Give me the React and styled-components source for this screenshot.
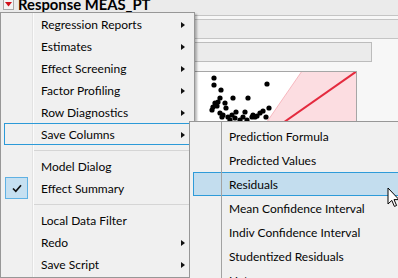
import React from "react";
import styled, { createGlobalStyle } from "styled-components";

const GlobalStyle = createGlobalStyle`
  html, body {
    margin: 0;
    padding: 0;
  }
  body {
    width: 398px;
    height: 278px;
    overflow: hidden;
    background: #f7f7f7;
    font-family: Lato, "Noto Sans", sans-serif;
  }
`;

const Screen = styled.div`
  position: relative;
  width: 398px;
  height: 278px;
  overflow: hidden;
  background: #f7f7f7;
`;

/* ---------- report behind the menus ---------- */

const TitleBar = styled.div`
  display: flex;
  align-items: flex-start;
  height: 15px;
  background: #ebebeb;
  border-bottom: 1px solid #c4c4c4;
`;

const Disclosure = styled.div`
  display: flex;
  align-items: center;
  justify-content: center;
  width: 9px;
  height: 9px;
  margin: 0 4px 0 3px;
  background: #f4f4f4;
  border: 1px solid #a9a9a9;
  border-top: none;
`;

const Title = styled.div`
  font-family: Lato, "Liberation Sans", sans-serif;
  font-weight: bold;
  font-size: 14.8px;
  line-height: 12px;
  margin-top: -2px;
  color: #000;
  white-space: nowrap;
`;

const Strip = styled.div`
  height: 18px;
  margin-top: 3px;
  background: #ebebeb;
  border-top: 1px solid #c4c4c4;
  border-bottom: 1px solid #c4c4c4;
`;

const Field = styled.div`
  width: 340px;
  height: 18px;
  margin: 3px 0 0 30px;
  background: #ebebeb;
  border: 1px solid #bcbcbc;
`;

const PlotFrame = styled.div`
  width: 175px;
  height: 130px;
  margin: 9px 0 0 180px;
  background: #fff;
  border: 1px solid #a6a6a6;
  svg {
    display: block;
  }
`;

/* ---------- popup menus ---------- */

const Menu = styled.div`
  position: absolute;
  left: 0;
  top: 12px;
  width: 193px;
  padding: 0 0 2px;
  background: #f0f0f0;
  border: 1px solid #979797;
  box-shadow: 2px 2px 2px rgba(0, 0, 0, 0.28);
  &::before {
    content: "";
    position: absolute;
    top: 0;
    bottom: 0;
    left: 31px;
    width: 1px;
    background: #e2e2e2;
    border-right: 1px solid #fbfbfb;
  }
`;

const Item = styled.div`
  position: relative;
  display: grid;
  grid-template-columns: 29px 1fr 12px;
  align-items: center;
  height: 22px;
  margin: 0 1px 0 3px;
  padding-top: 1px;
  box-sizing: border-box;
  font-size: 12px;
  color: #050505;
  white-space: nowrap;
  box-shadow: ${(p) => (p.$focus ? "inset 0 0 0 1px #2b9ad8" : "none")};
`;

const Label = styled.span`
  padding-left: 8px;
`;

const Arrow = styled.span`
  width: 0;
  height: 0;
  border-top: 3.5px solid transparent;
  border-bottom: 3.5px solid transparent;
  border-left: 4px solid #111;
`;

const CheckBox = styled.span`
  display: flex;
  align-items: center;
  justify-content: center;
  width: 21px;
  height: 20px;
  margin: -1px 0 0 1px;
  background: #c6e0f1;
  border: 1px solid #5fb1e3;
`;

const Separator = styled.div`
  height: 10px;
  display: flex;
  align-items: center;
  padding: 0 2px 0 33px;
  &::after {
    content: "";
    flex: 1;
    height: 1px;
    background: #d5d5d5;
  }
`;

const SubMenu = styled.div`
  position: absolute;
  left: 189px;
  top: 121px;
  width: 240px;
  padding: 2px 0;
  background: #f0f0f0;
  border: 1px solid #979797;
  &::before {
    content: "";
    position: absolute;
    top: 0;
    bottom: 0;
    left: 31px;
    width: 1px;
    background: #a2a2a2;
    z-index: 1;
  }
`;

const SubItem = styled.div`
  display: flex;
  align-items: center;
  margin-left: 3px;
  padding-top: 1px;
  font-size: 12px;
  color: #050505;
  white-space: nowrap;
  background: ${(p) => (p.$hot ? "#c3ddee" : "transparent")};
  border: ${(p) => (p.$hot ? "1px solid #2e9bd9" : "none")};
  border-right: none;
  padding-left: ${(p) => (p.$hot ? "35px" : "36px")};
  height: ${(p) => (p.$hot ? "21px" : "23px")};
`;

const Cursor = styled.svg`
  position: absolute;
  left: 387px;
  top: 187px;
`;

const dots = [
  [214, 78], [214, 85], [221, 90], [267, 84], [233, 98], [248, 98],
  [220, 98], [215, 103], [217, 106], [225, 103], [226, 108], [212, 110],
  [220, 113], [222, 117], [228, 117], [235, 118], [243, 117], [252, 117],
  [257, 116], [260, 113], [263, 111], [269, 108], [255, 117], [218, 102],
  [213, 107], [232, 115], [253, 115], [223, 115], [230, 120], [247, 120],
  [240, 120], [266, 117], [236, 112], [245, 112],
];

const mainItems = [
  { label: "Regression Reports", sub: true },
  { label: "Estimates", sub: true },
  { label: "Effect Screening", sub: true },
  { label: "Factor Profiling", sub: true },
  { label: "Row Diagnostics", sub: true },
  { label: "Save Columns", sub: true, focus: true },
  { sep: true },
  { label: "Model Dialog" },
  { label: "Effect Summary", checked: true },
  { sep: true },
  { label: "Local Data Filter" },
  { label: "Redo", sub: true },
  { label: "Save Script", sub: true },
];

const subItems = [
  "Prediction Formula",
  "Predicted Values",
  "Residuals",
  "Mean Confidence Interval",
  "Indiv Confidence Interval",
  "Studentized Residuals",
  "Hats",
];

function Plot() {
  return (
    <svg width="175" height="130" viewBox="181 72 175 130">
      <polygon
        points="302,71 357,71 357,203 211,203"
        fill="#fcdde1"
        stroke="#f5aab3"
        strokeWidth="0.8"
      />
      <line x1="357" y1="71" x2="200" y2="181" stroke="#e42a3e" strokeWidth="2" />
      {dots.map(([x, y], i) => (
        <circle key={i} cx={x} cy={y} r="2.6" fill="#000" />
      ))}
    </svg>
  );
}

export default function App() {
  return (
    <Screen>
      <GlobalStyle />
      <TitleBar>
        <Disclosure>
          <svg width="7" height="5" viewBox="0 0 7 5">
            <polygon points="0,0 7,0 3.5,4.5" fill="#d0101a" />
          </svg>
        </Disclosure>
        <Title>Response MEAS_PT</Title>
      </TitleBar>
      <Strip />
      <Field />
      <PlotFrame>
        <Plot />
      </PlotFrame>

      <Menu>
        {mainItems.map((it, i) =>
          it.sep ? (
            <Separator key={i} />
          ) : (
            <Item key={i} $focus={it.focus}>
              {it.checked ? (
                <CheckBox>
                  <svg width="10" height="9" viewBox="0 0 10 9">
                    <path d="M1 4.5 L3.8 7.3 L9 1.2" fill="none" stroke="#111" strokeWidth="1.7" />
                  </svg>
                </CheckBox>
              ) : (
                <span />
              )}
              <Label>{it.label}</Label>
              {it.sub ? <Arrow /> : <span />}
            </Item>
          )
        )}
      </Menu>

      <SubMenu>
        {subItems.map((label) => (
          <SubItem key={label} $hot={label === "Residuals"}>
            {label}
          </SubItem>
        ))}
      </SubMenu>

      <Cursor width="13" height="21" viewBox="0 0 13 21">
        <path
          d="M1 1 L1 17 L4.8 13.4 L7.4 19.4 L9.6 18.5 L7 12.6 L12 12.6 Z"
          fill="#fff"
          stroke="#000"
          strokeWidth="1"
          strokeLinejoin="miter"
        />
      </Cursor>
    </Screen>
  );
}
